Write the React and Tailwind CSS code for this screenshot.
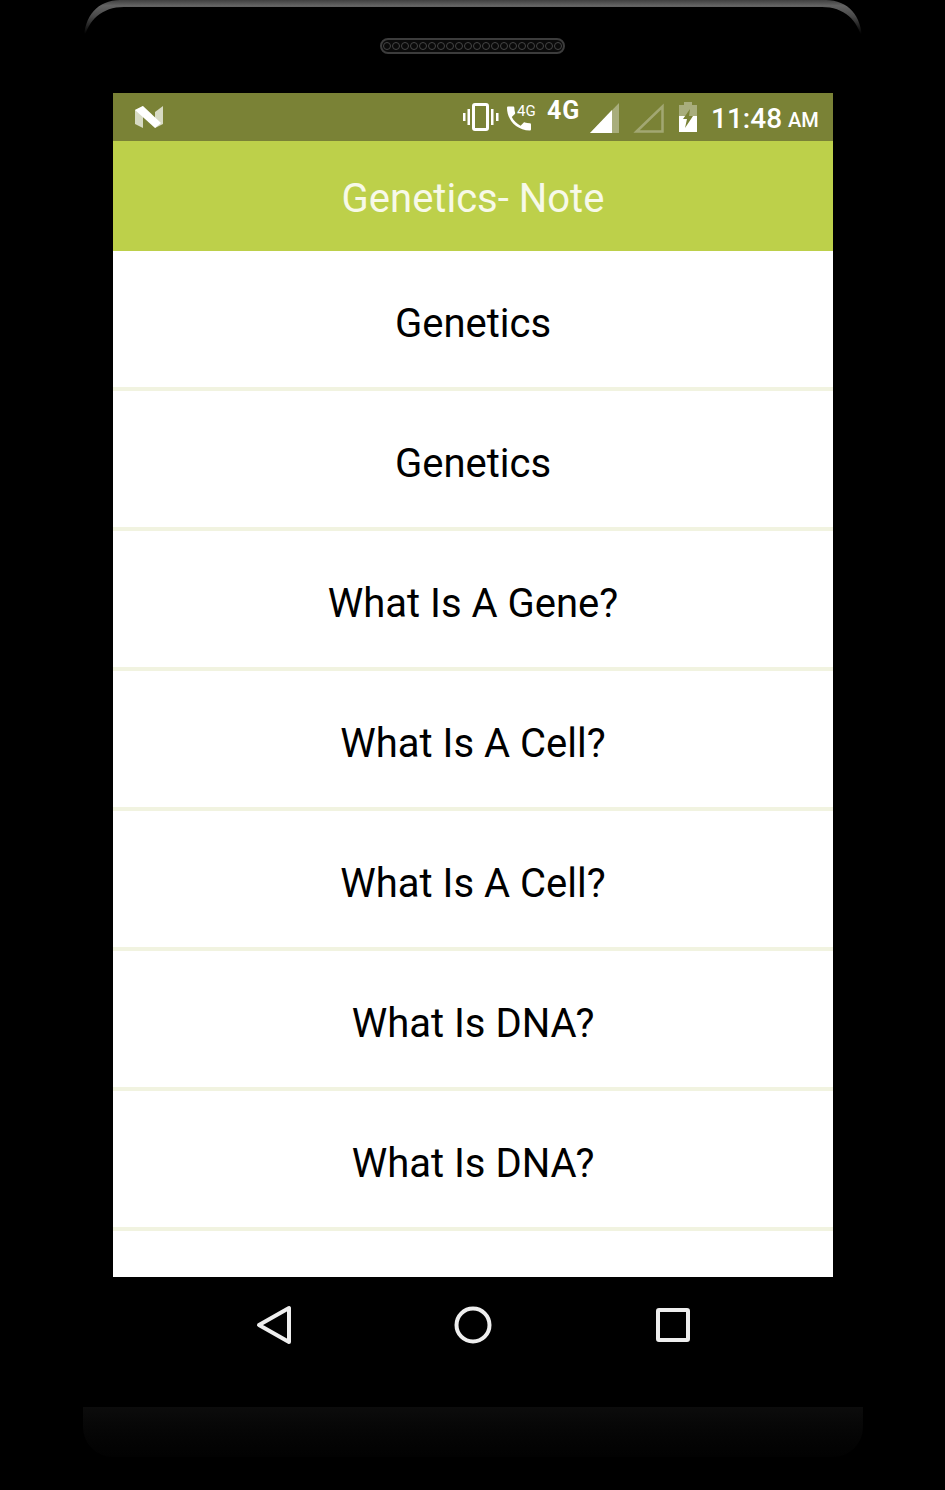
const rows = [
  "Genetics",
  "Genetics",
  "What Is A Gene?",
  "What Is A Cell?",
  "What Is A Cell?",
  "What Is DNA?",
  "What Is DNA?",
];

const roboto = "font-['Roboto','Liberation_Sans',sans-serif]";

function FrameTop() {
  return (
    <svg className="absolute left-[84px] top-0" width="780" height="44" viewBox="0 0 780 44">
      <defs>
        <linearGradient id="edge" x1="0" y1="0" x2="0" y2="1">
          <stop offset="0" stopColor="#3f3f3f" />
          <stop offset="0.14" stopColor="#636363" />
          <stop offset="0.4" stopColor="#4a4a4a" />
          <stop offset="0.85" stopColor="#000000" />
        </linearGradient>
      </defs>
      <path
        d="M0 40C0 16 14 0 36 0H742C764 0 778 16 778 40C774 20 760 7 738 7H40C18 7 4 20 0 40Z"
        fill="url(#edge)"
      />
    </svg>
  );
}

function Speaker() {
  return (
    <div className="flex h-[16px] w-[185px] items-center justify-center gap-[1px] rounded-full border-2 border-[#3c3c3c] bg-[#0a0a0a]">
      {Array.from({ length: 20 }).map((_, i) => (
        <span key={i} className="h-[8px] w-[8px] rounded-full border border-[#454545]" />
      ))}
    </div>
  );
}

function NLogo() {
  return (
    <svg width="30" height="24" viewBox="0 0 30 24">
      <path d="M1 5L9 1V23L1 19Z" fill="#fff" fillOpacity="0.7" />
      <path d="M21 7L29 1V19L21 23Z" fill="#fff" fillOpacity="0.7" />
      <path d="M1 5L9 1L27 18L21 23Z" fill="#fff" />
    </svg>
  );
}

function VibrateIcon() {
  return (
    <svg width="36" height="28" viewBox="0 0 36 28" fill="#fff">
      <rect x="10.5" y="1.5" width="14" height="25" rx="1.5" fill="none" stroke="#fff" strokeWidth="3" />
      <rect x="0" y="10" width="2.5" height="8" />
      <rect x="4.5" y="6" width="2.5" height="16" />
      <rect x="28" y="6" width="2.5" height="16" />
      <rect x="33" y="10" width="2.5" height="8" />
    </svg>
  );
}

function PhoneIcon() {
  return (
    <svg width="24" height="25" viewBox="3 3 18 18" fill="#fff">
      <path d="M6.6 10.8c1.4 2.8 3.8 5.1 6.6 6.6l2.2-2.2c.3-.3.7-.4 1-.2 1.1.4 2.3.6 3.6.6.6 0 1 .4 1 1V20c0 .6-.4 1-1 1C10.6 21 3 13.4 3 4c0-.6.4-1 1-1h3.5c.6 0 1 .4 1 1 0 1.3.2 2.5.6 3.6.1.3 0 .7-.2 1z" />
    </svg>
  );
}

function SignalFull() {
  return (
    <svg width="30" height="30" viewBox="0 0 30 30">
      <path d="M0 30L29 0V30Z" fill="#fff" fillOpacity="0.35" />
      <path d="M0 30L22 7V30Z" fill="#fff" />
    </svg>
  );
}

function SignalEmpty() {
  return (
    <svg width="31" height="30" viewBox="0 0 31 30">
      <path d="M3.5 28.5L29.5 3.5V28.5Z" fill="none" stroke="#fff" strokeOpacity="0.3" strokeWidth="2.5" />
    </svg>
  );
}

function BatteryIcon() {
  return (
    <svg width="20" height="30" viewBox="0 0 20 30">
      <path d="M6 0H14V3H19V14H1V3H6Z" fill="#fff" fillOpacity="0.35" />
      <path d="M1 14H19V30H1Z" fill="#fff" />
      <path d="M12 7L5 17H9L7 26L15 14H11Z" fill="#7a8236" />
    </svg>
  );
}

function StatusBar() {
  return (
    <div className="flex h-[48px] items-center bg-[#7a8236] pl-[21px] text-white">
      <NLogo />
      <div className="ml-[299px]">
        <VibrateIcon />
      </div>
      <div className="relative ml-[8px] mt-[4px] h-[28px] w-[30px]">
        <div className="mt-[1px]">
          <PhoneIcon />
        </div>
        <span className="absolute left-[10px] top-[-4px] text-[15px] leading-[20px]">4G</span>
      </div>
      <span className="mb-[13px] ml-[10px] w-[35px] text-[25px] leading-[24px] font-bold tracking-[1px]">4G</span>
      <div className="ml-[8px] mt-[1px]">
        <SignalFull />
      </div>
      <div className="ml-[13px] mt-[1px]">
        <SignalEmpty />
      </div>
      <div className="ml-[14px] mt-[-1px]">
        <BatteryIcon />
      </div>
      <span className="ml-[13px] mt-[3px] text-[28px] leading-[48px] font-medium whitespace-nowrap">
        11:48
      </span>
      <span className="ml-[6px] mt-[6px] text-[20px] leading-[48px] font-medium">AM</span>
    </div>
  );
}

function NavBar() {
  return (
    <div className="flex h-[96px] items-center pl-[143px] text-[#eeeeee]">
      <svg width="36" height="40" viewBox="0 0 36 40" fill="none" stroke="currentColor" strokeWidth="4" strokeLinejoin="round">
        <path d="M33 3V37L3 20Z" />
      </svg>
      <svg className="ml-[162px]" width="38" height="38" viewBox="0 0 38 38" fill="none" stroke="currentColor" strokeWidth="4">
        <circle cx="19" cy="19" r="16.5" />
      </svg>
      <svg className="ml-[164px]" width="34" height="34" viewBox="0 0 34 34" fill="none" stroke="currentColor" strokeWidth="4" strokeLinejoin="round">
        <rect x="2" y="2" width="30" height="30" rx="1" />
      </svg>
    </div>
  );
}

export default function App() {
  return (
    <div className={`relative h-[1490px] w-[945px] overflow-hidden bg-black ${roboto}`}>
      <FrameTop />
      <div className="flex h-[93px] justify-center pt-[38px]">
        <Speaker />
      </div>

      <div className="ml-[113px] w-[720px]">
        <StatusBar />
        <div className="flex h-[110px] items-center justify-center bg-[#bdd04a] pt-[5px] text-[40px] text-[#f7f9e8]">
          Genetics- Note
        </div>
        <div className="h-[1026px] overflow-hidden bg-white">
          {rows.map((label, i) => (
            <div
              key={i}
              className="flex h-[140px] items-center justify-center border-b-4 border-[#f1f3e0] pt-[10px] text-[40px] text-black"
            >
              {label}
            </div>
          ))}
        </div>
        <NavBar />
      </div>

      <div className="mx-auto mt-[34px] h-[50px] w-[780px] rounded-b-[30px] bg-gradient-to-b from-[#0c0c0c] to-[#020202]" />
    </div>
  );
}
